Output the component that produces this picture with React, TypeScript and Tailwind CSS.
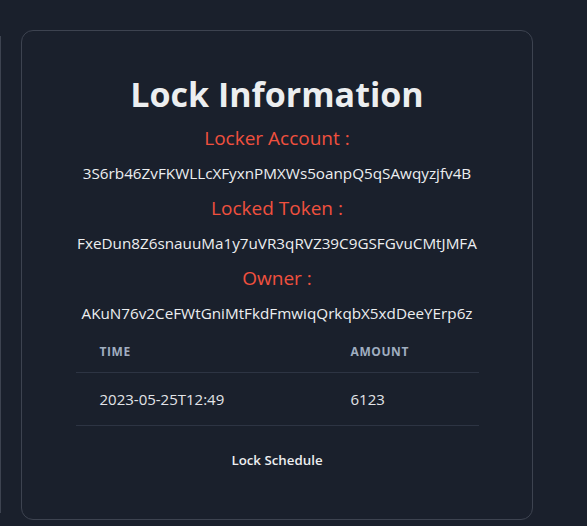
export default function App() {
  const fields = [
    { label: "Locker Account :", value: "3S6rb46ZvFKWLLcXFyxnPMXWs5oanpQ5qSAwqyzjfv4B" },
    { label: "Locked Token :", value: "FxeDun8Z6snauuMa1y7uVR3qRVZ39C9GSFGvuCMtJMFA" },
    { label: "Owner :", value: "AKuN76v2CeFWtGniMtFkdFmwiqQrkqbX5xdDeeYErp6z" },
  ];

  return (
    <div className="flex h-[526px] items-start overflow-hidden bg-[#1a202c] font-['Open_Sans',sans-serif] text-[#eceef0]">
      <div className="mt-[36px] h-[477px] w-px shrink-0 bg-[#3d4350]" />
      <div className="ml-[20px] mt-[30px] flex h-[490px] w-[512px] shrink-0 flex-col items-center rounded-xl border border-[#3d4350] pt-[43px]">
        <h1 className="text-[34px] font-bold leading-[40px]">Lock Information</h1>
        {fields.map((f, i) => (
          <div key={f.label} className="flex flex-col items-center">
            <p className={`${i === 0 ? "mt-[10px]" : "mt-[9px]"} text-[19px] leading-[28px] text-[#f0503e]`}>{f.label}</p>
            <p className="mt-[9px] text-[15.25px] leading-[24px]">{f.value}</p>
          </div>
        ))}
        <table className="mt-[7px] w-[403px] border-collapse text-left">
          <thead>
            <tr className="border-b border-[#2d3443]">
              <th className="w-[251px] px-6 py-3 text-[12px] font-bold uppercase leading-4 tracking-wider text-[#a0aec0]">Time</th>
              <th className="px-6 py-3 text-[12px] font-bold uppercase leading-4 tracking-wider text-[#a0aec0]">Amount</th>
            </tr>
          </thead>
          <tbody>
            <tr className="border-b border-[#2d3443]">
              <td className="px-6 py-4 text-[15px] leading-5 text-[#e2e4e8]">2023-05-25T12:49</td>
              <td className="px-6 py-4 text-[15px] leading-5 text-[#e2e4e8]">6123</td>
            </tr>
          </tbody>
          <caption className="caption-bottom mt-4 px-6 py-2 text-[13.3px] font-semibold leading-5 text-[#eceef0]">Lock Schedule</caption>
        </table>
      </div>
    </div>
  );
}
